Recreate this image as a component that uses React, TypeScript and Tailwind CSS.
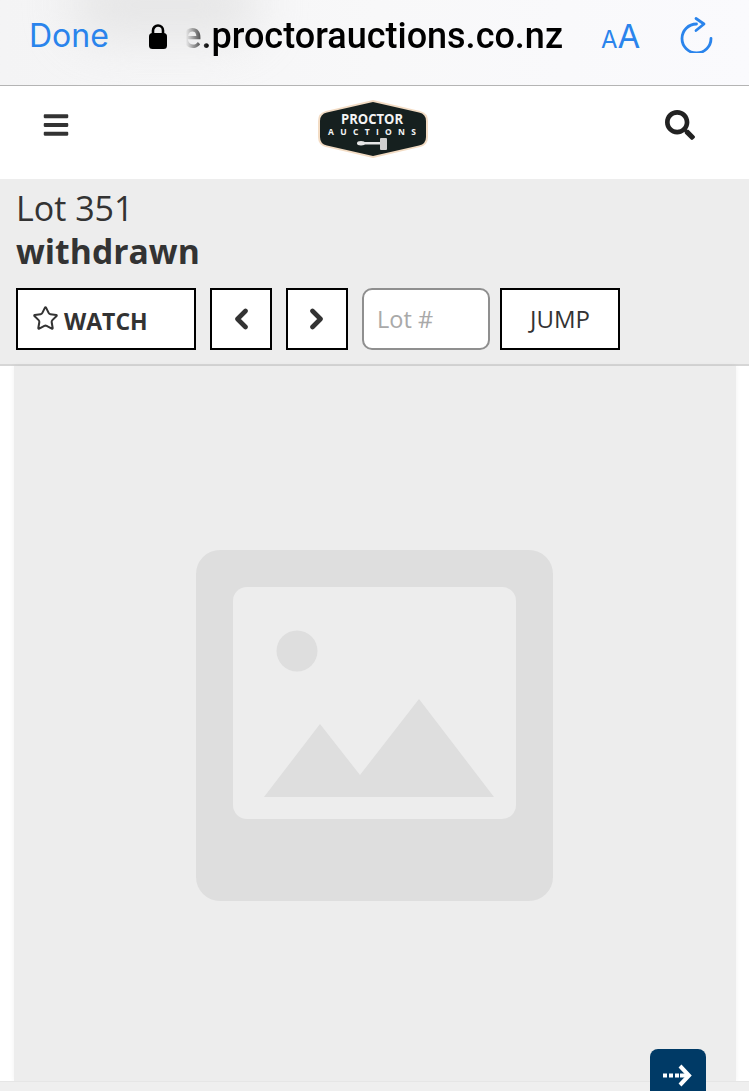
import { Star } from "lucide-react";
import { FaBars, FaSearch } from "react-icons/fa";

function Logo() {
  return (
    <svg width="112" height="58" viewBox="0 0 112 58" className="block">
      <path d="M56 0 L103 11 Q111 13 111 21 L111 37 Q111 45 103 47 L56 58 L9 47 Q1 45 1 37 L1 21 Q1 13 9 11 Z" fill="#f3dcc4" />
      <path d="M56 2 L102 12.5 Q109 14 109 21 L109 37 Q109 44 102 45.5 L56 56 L10 45.5 Q3 44 3 37 L3 21 Q3 14 10 12.5 Z" fill="#16201f" />
      <text x="55" y="24" textAnchor="middle" fill="#f4f4f4" fontFamily="'Open Sans', sans-serif" fontWeight="700" fontSize="13.5" textLength="62" lengthAdjust="spacingAndGlyphs">PROCTOR</text>
      <text x="55" y="34.5" textAnchor="middle" fill="#f4f4f4" fontFamily="'Open Sans', sans-serif" fontWeight="700" fontSize="8.5" textLength="88" lengthAdjust="spacing">AUCTIONS</text>
      <rect x="42" y="42" width="22" height="2.5" rx="1" fill="#e6e6e6" />
      <ellipse cx="44" cy="43.2" rx="4" ry="2.2" fill="#e6e6e6" />
      <rect x="63" y="38" width="7" height="12" rx="1" fill="#cfcfcf" />
    </svg>
  );
}

function Placeholder() {
  return (
    <svg width="357" height="351" viewBox="0 0 357 351" className="block">
      <rect width="357" height="351" rx="24" fill="#dedede" />
      <rect x="37" y="37" width="283" height="232" rx="14" fill="#ededed" />
      <circle cx="101" cy="101" r="20.5" fill="#dedede" />
      <path d="M68 247 L124 174 L164 225 L223 149 L298 247 Z" fill="#dedede" />
    </svg>
  );
}

export default function App() {
  return (
    <div className="relative h-[1091px] w-[749px] overflow-hidden bg-white font-['Open_Sans',sans-serif] text-[#333]">
      {/* browser bar */}
      <div className="relative flex h-[86px] items-center overflow-hidden border-b border-[#b4b4b4] bg-gradient-to-r from-[#f4f4f5] via-[#f8f8f9] to-[#fafafd] pb-[13px] pl-[29px] pr-[35px] font-['Inter',sans-serif]">
        <div className="absolute -top-[30px] left-[70px] h-[70px] w-[190px] rounded-full bg-[#dcdcdc] opacity-60 blur-xl" />
        <span className="relative w-[119px] shrink-0 text-[32px] text-[#2a84ec]">Done</span>
        <svg width="20" height="26" viewBox="0 0 20 26" className="relative shrink-0">
          <path d="M5 11 V7.5 a5 5 0 0 1 10 0 V11" fill="none" stroke="#000" strokeWidth="2.6" />
          <rect x="1" y="10" width="18" height="16" rx="3.5" fill="#000" />
        </svg>
        <div className="relative ml-[10px] flex w-[385px] shrink-0 justify-end whitespace-nowrap font-['Roboto',sans-serif] text-[36px] font-medium text-black [mask-image:linear-gradient(to_right,transparent_2%,rgba(0,0,0,0.35)_4%,black_8%)]">
          e.proctorauctions.co.nz
        </div>
        <div className="relative ml-[38px] flex items-baseline leading-none text-[#2a84ec]">
          <span className="text-[24px]">A</span>
          <span className="text-[33px]">A</span>
        </div>
        <svg width="36" height="42" viewBox="0 0 36 42" className="relative mb-[9px] ml-auto shrink-0" fill="none" stroke="#2a84ec" strokeWidth="2.8" strokeLinecap="round" strokeLinejoin="round">
          <path d="M18.5 13 A14.5 14.5 0 1 0 33 27.5" />
          <path d="M18 7.5 L26 13 L18 19.5" />
        </svg>
      </div>

      {/* site nav */}
      <div className="flex h-[93px] items-center justify-between pb-[8px] pl-[42px] pr-[54px]">
        <FaBars size={28} className="mb-[8px] text-[#333]" />
        <div className="ml-[10px]">
          <Logo />
        </div>
        <FaSearch size={30} className="mb-[8px] text-[#222]" />
      </div>

      {/* lot header */}
      <div className="h-[187px] border-b-2 border-[#d6d6d6] bg-[#ededed] px-[16px] pt-[8px]">
        <div className="text-[34px] leading-[42px] text-[#333]">Lot 351</div>
        <div className="text-[33.7px] leading-[44px] font-bold text-[#333]">withdrawn</div>
        <div className="mt-[15px] flex items-center gap-[14px]">
          <button className="flex h-[62px] w-[180px] items-center gap-[5px] border-2 border-black bg-white pl-[14px] text-[23px] font-bold text-[#333]">
            <Star size={27} strokeWidth={1.8} className="mb-[1px]" />
            <span className="mt-[4px]">WATCH</span>
          </button>
          <button className="flex h-[62px] w-[62px] items-center justify-center border-2 border-black bg-white">
            <svg width="16" height="22" viewBox="0 0 16 22" fill="none" stroke="#333" strokeWidth="4.6" strokeLinecap="round" strokeLinejoin="round">
              <path d="M12.5 3 L4.5 11 L12.5 19" />
            </svg>
          </button>
          <button className="flex h-[62px] w-[62px] items-center justify-center border-2 border-black bg-white">
            <svg width="16" height="22" viewBox="0 0 16 22" fill="none" stroke="#333" strokeWidth="4.6" strokeLinecap="round" strokeLinejoin="round">
              <path d="M3.5 3 L11.5 11 L3.5 19" />
            </svg>
          </button>
          <input
            placeholder="Lot #"
            className="h-[62px] w-[128px] rounded-[10px] border-2 border-[#8f8f8f] bg-white pl-[13px] text-[23.5px] placeholder:text-[#a9a9a9]"
          />
          <button className="-ml-[4px] h-[62px] w-[120px] border-2 border-black bg-white text-[24px] text-[#333]">
            JUMP
          </button>
        </div>
      </div>

      {/* image panel */}
      <div className="h-[715px] pl-[14px] pr-[13px]">
        <div className="flex h-full items-center justify-center bg-[#ededed] pt-[4px] pr-[1px] shadow-[0_0_5px_rgba(0,0,0,0.06)]">
          <Placeholder />
        </div>
      </div>

      <div className="h-[10px] border-t border-[#e6e6e6] bg-[#efefef]" />

      <div className="absolute left-[650px] top-[1049px] flex h-[60px] w-[56px] items-start justify-center rounded-[8px] bg-[#003a66] pt-[14px]">
        <svg width="30" height="24" viewBox="0 0 30 24">
          <path d="M0 10.5h4v4H0zM6 10.5h4v4H6zM12 10.5h4v4h-4z" fill="#fff" />
          <path d="M17 12.5h9" stroke="#fff" strokeWidth="4" fill="none" />
          <path d="M17 3l9 9.5-9 9.5" stroke="#fff" strokeWidth="4" fill="none" />
        </svg>
      </div>
    </div>
  );
}
